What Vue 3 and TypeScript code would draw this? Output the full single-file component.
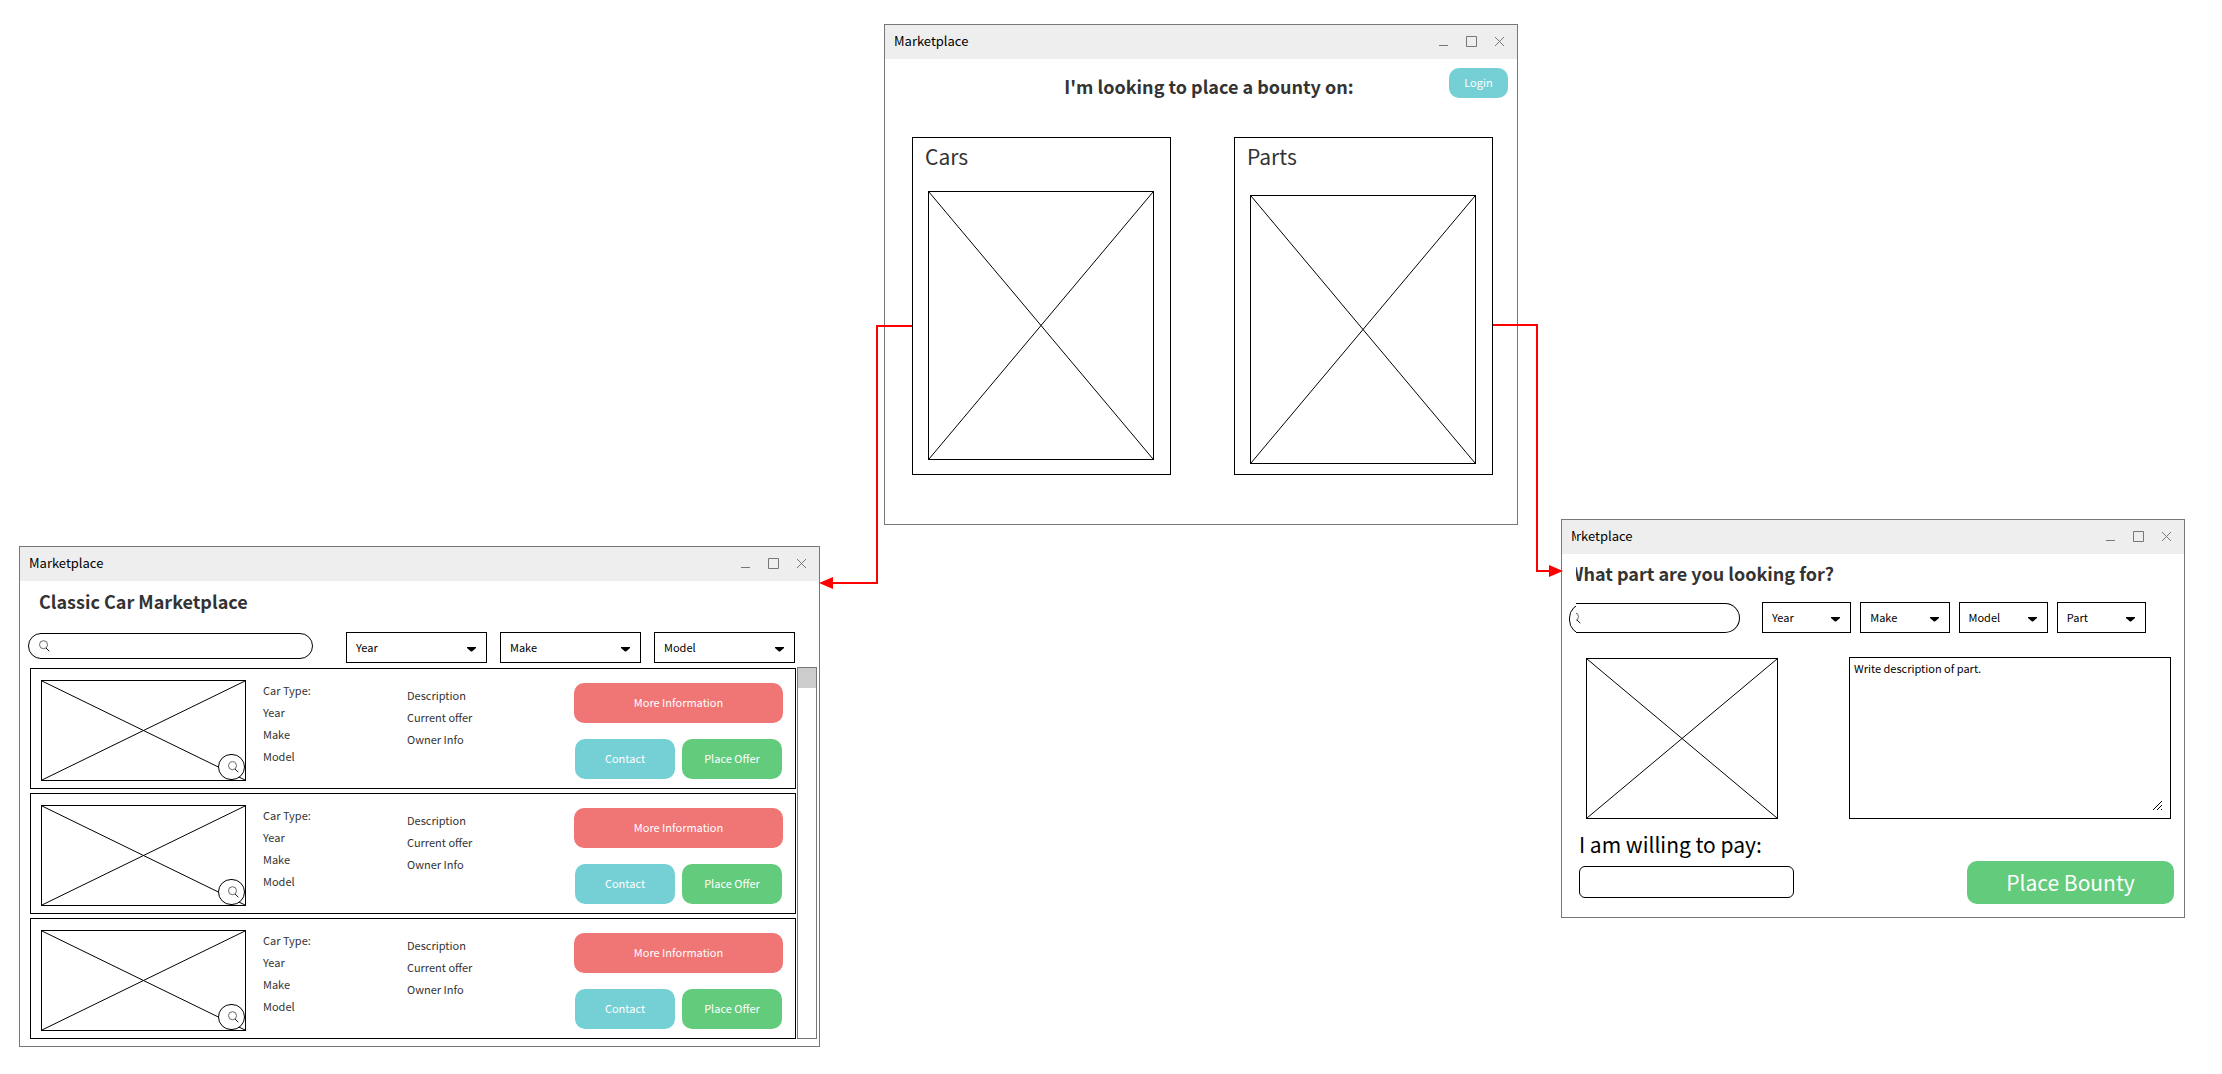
<script setup lang="ts">
import { defineComponent, h } from 'vue'

interface Choice {
  id: string
  title: string
}

const choices: Choice[] = [
  { id: 'cars', title: 'Cars' },
  { id: 'parts', title: 'Parts' },
]

const carFilters: string[] = ['Year', 'Make', 'Model']
const partFilters: string[] = ['Year', 'Make', 'Model', 'Part']
const listings: number[] = [1, 2, 3]
const specs: string[] = ['Car Type:', 'Year', 'Make', 'Model']
const details: string[] = ['Description', 'Current offer', 'Owner Info']

const WindowControls = defineComponent({
  name: 'WindowControls',
  setup() {
    const shapes: [string, string][] = [
      ['Minimize', 'M10 20.5H19'],
      ['Maximize', 'M9.5 11.5H19.5V21.5H9.5Z'],
      ['Close', 'M10 12L19 21M19 12L10 21'],
    ]
    return () =>
      h(
        'div',
        { class: 'controls' },
        shapes.map(([label, d]) =>
          h('button', { type: 'button', class: 'control', 'aria-label': label }, [
            h('svg', { viewBox: '0 0 28 34', width: 28, height: 34 }, [h('path', { d })]),
          ]),
        ),
      )
  },
})

const Crossed = defineComponent({
  name: 'Crossed',
  setup() {
    return () =>
      h('svg', { class: 'crossed', viewBox: '0 0 100 100', preserveAspectRatio: 'none' }, [
        h('path', { d: 'M0 0L100 100M100 0L0 100', 'vector-effect': 'non-scaling-stroke' }),
      ])
  },
})

const Magnifier = defineComponent({
  name: 'Magnifier',
  setup() {
    return () =>
      h('svg', { class: 'magnifier', viewBox: '0 0 11 12', width: 11, height: 12 }, [
        h('circle', { cx: 4.5, cy: 4.7, r: 4, stroke: '#666' }),
        h('path', { d: 'M7 8L10.3 11.2', stroke: '#111' }),
      ])
  },
})
</script>

<template>
  <main class="board">
    <section class="window window-home">
      <header class="titlebar">
        <span class="title">Marketplace</span>
        <WindowControls />
      </header>
      <div class="hero">
        <h1 class="heading">I'm looking to place a bounty on:</h1>
        <button type="button" class="btn btn-teal login">Login</button>
      </div>
      <div class="choices">
        <article v-for="c in choices" :key="c.id" class="choice" :class="c.id">
          <h2 class="choice-title">{{ c.title }}</h2>
          <div class="picture choice-picture"><Crossed /></div>
        </article>
      </div>
    </section>

    <section class="window window-cars">
      <header class="titlebar">
        <span class="title">Marketplace</span>
        <WindowControls />
      </header>
      <h1 class="heading cars-heading">Classic Car Marketplace</h1>
      <form class="toolbar cars-toolbar" @submit.prevent>
        <div class="search">
          <Magnifier />
          <input type="search" class="search-input" aria-label="Search cars" />
        </div>
        <div class="filters">
          <div v-for="f in carFilters" :key="f" class="filter">
            <select class="select" :aria-label="f">
              <option>{{ f }}</option>
            </select>
            <svg class="caret" viewBox="0 0 9 5" width="9" height="5"><path d="M0 0H9V1L5 4.5H4L0 1Z" /></svg>
          </div>
        </div>
      </form>
      <div class="results">
        <ul class="rows">
          <li v-for="n in listings" :key="n" class="row">
            <div class="picture row-picture">
              <Crossed />
              <button type="button" class="zoom" aria-label="Enlarge picture"><Magnifier /></button>
            </div>
            <ul class="facts specs">
              <li v-for="s in specs" :key="s">{{ s }}</li>
            </ul>
            <ul class="facts details">
              <li v-for="d in details" :key="d">{{ d }}</li>
            </ul>
            <div class="actions">
              <button type="button" class="btn btn-red">More Information</button>
              <div class="pair">
                <button type="button" class="btn btn-teal">Contact</button>
                <button type="button" class="btn btn-green">Place Offer</button>
              </div>
            </div>
          </li>
        </ul>
        <div class="scrollbar"><div class="thumb"></div></div>
      </div>
    </section>

    <section class="window window-parts">
      <header class="titlebar">
        <span class="title"><span class="cut-letter">M</span>rketplace</span>
        <WindowControls />
      </header>
      <h1 class="heading parts-heading">What part are you looking for?</h1>
      <form class="toolbar parts-toolbar" @submit.prevent>
        <div class="search-cut">
          <div class="search-end"></div>
          <div class="search-rest">
            <Magnifier />
            <input type="search" class="search-input" aria-label="Search parts" />
          </div>
        </div>
        <div class="filters">
          <div v-for="f in partFilters" :key="f" class="filter">
            <select class="select" :aria-label="f">
              <option>{{ f }}</option>
            </select>
            <svg class="caret" viewBox="0 0 9 5" width="9" height="5"><path d="M0 0H9V1L5 4.5H4L0 1Z" /></svg>
          </div>
        </div>
      </form>
      <div class="part-info">
        <div class="picture part-picture"><Crossed /></div>
        <div class="note">
          <textarea class="textarea" aria-label="Description of part">Write description of part.</textarea>
          <svg class="grip" viewBox="0 0 10 10" width="10" height="10"><path d="M0 9L9 0M4 9L9 4M8 9L9 8" /></svg>
        </div>
      </div>
      <div class="offer">
        <div class="pay">
          <label class="pay-label" for="pay">I am willing to pay:</label>
          <input id="pay" type="text" class="pay-input" />
        </div>
        <button type="button" class="btn btn-green place-bounty">Place Bounty</button>
      </div>
    </section>

    <svg class="links" width="100%" height="100%">
      <path class="wire" d="M912 326H877V583H832" />
      <path class="head" d="M819 583L833 577V589Z" />
      <path class="wire" d="M1493 325H1537V571H1550" />
      <path class="head" d="M1563 571L1549 565V577Z" />
    </svg>
  </main>
</template>

<style>
body {
  margin: 0;
  background: #fff;
}
</style>

<style scoped>
.board {
  position: relative;
  min-height: 100vh;
  background: #fff;
  color: #333;
  font-family: "Noto Sans CJK SC", "Noto Sans", sans-serif;
  font-size: 11px;
  line-height: 22px;
}

.board :deep(*) {
  box-sizing: border-box;
}

h1,
h2,
ul {
  margin: 0;
  padding: 0;
  list-style: none;
}

button,
input,
select,
textarea {
  font: inherit;
  color: #000;
}

.window {
  position: absolute;
  display: flex;
  flex-direction: column;
  border: 1px solid #777;
  background: #fff;
}

.window-home {
  left: 884px;
  top: 24px;
  width: 634px;
  min-height: 501px;
}

.window-cars {
  left: 19px;
  top: 546px;
  width: 801px;
}

.window-parts {
  left: 1561px;
  top: 519px;
  width: 624px;
}

.titlebar {
  display: flex;
  justify-content: space-between;
  height: 34px;
  padding: 0 4px 0 9px;
  background: #eee;
}

.title {
  display: flex;
  color: #000;
  font-size: 13px;
  line-height: 32px;
}

.cut-letter {
  width: 5px;
  overflow: hidden;
}

.titlebar :deep(.controls) {
  display: flex;
}

.titlebar :deep(.control) {
  width: 28px;
  height: 34px;
  padding: 0;
  border: 0;
  background: none;
}

.titlebar :deep(.control svg) {
  display: block;
  fill: none;
  stroke: #777;
}

.heading {
  color: #333;
  font-size: 18px;
  line-height: 28px;
  font-weight: 700;
}

.btn {
  padding: 0 0 2px;
  border: 0;
  border-radius: 10px;
  color: #fff;
  height: 40px;
}

.btn-teal {
  background: #74d0d5;
}

.btn-green {
  background: #62cb7c;
}

.btn-red {
  background: #f07575;
}

.picture {
  position: relative;
  border: 1px solid #000;
}

.picture :deep(.crossed) {
  display: block;
  width: 100%;
  height: 100%;
  fill: none;
  stroke: #000;
}

.hero {
  display: flex;
  align-items: flex-start;
  padding: 9px 9px 0 84px;
}

.hero .heading {
  flex: 1;
  padding-top: 4px;
  text-align: center;
}

.login {
  width: 59px;
  height: 30px;
}

.choices {
  display: flex;
  gap: 63px;
  padding: 37px 24px 0 27px;
}

.choice {
  flex: 1;
  padding: 2px 16px 14px 15px;
  border: 1px solid #000;
}

.choice-title {
  margin-left: -3px;
  font-size: 21px;
  line-height: 32px;
  font-weight: 400;
}

.choice-picture {
  height: 269px;
  margin-top: 19px;
}

.parts {
  padding-bottom: 10px;
}

.parts .choice-picture {
  margin-top: 23px;
}

.cars-heading {
  padding: 6px 19px 0;
}

.toolbar {
  display: flex;
  align-items: flex-start;
}

.cars-toolbar {
  gap: 33px;
  padding: 17px 24px 0 8px;
}

.search {
  display: flex;
  flex: 0 0 285px;
  align-items: center;
  gap: 6px;
  height: 26px;
  margin-top: 1px;
  padding: 0 12px 0 10px;
  border: 1px solid #000;
  border-radius: 13px;
}

.search :deep(.magnifier),
.search-rest :deep(.magnifier),
.zoom :deep(.magnifier) {
  flex: none;
  fill: none;
}

.search-input {
  flex: 1;
  min-width: 0;
  height: 20px;
  padding: 0;
  border: 0;
  outline: 0;
  background: none;
  appearance: none;
}

.filters {
  display: flex;
  flex: 1;
  gap: 13px;
}

.filter {
  position: relative;
  flex: 1;
}

.select {
  display: block;
  width: 100%;
  height: 31px;
  padding: 0 24px 2px 9px;
  border: 1px solid #000;
  border-radius: 0;
  background: #fff;
  appearance: none;
}

.caret {
  position: absolute;
  right: 11px;
  top: 15px;
}

.results {
  display: flex;
  gap: 1px;
  padding: 4px 2px 7px 10px;
}

.rows {
  display: flex;
  flex: 1;
  flex-direction: column;
  gap: 4px;
  padding-top: 1px;
}

.row {
  display: flex;
  align-items: flex-start;
  padding: 10px 12px 7px 10px;
  border: 1px solid #000;
}

.row-picture {
  width: 205px;
  height: 101px;
  margin-top: 1px;
}

.zoom {
  position: absolute;
  right: 0;
  bottom: 0;
  display: flex;
  align-items: center;
  justify-content: center;
  width: 27px;
  height: 26px;
  padding: 0 0 0 4px;
  border: 1px solid #000;
  border-radius: 13px;
  background: #fff;
}

.specs {
  width: 144px;
  margin-left: 17px;
}

.details {
  flex: 1;
  padding-top: 5px;
}

.actions {
  display: flex;
  flex-direction: column;
  gap: 16px;
  width: 209px;
  padding-top: 4px;
}

.pair {
  display: flex;
  gap: 7px;
  padding: 0 1px;
}

.pair .btn {
  flex: 1;
}

.scrollbar {
  width: 20px;
  border: 1px solid #777;
}

.thumb {
  height: 20px;
  background: #ccc;
}

.parts-heading {
  margin: 5px 14px 0;
  overflow: hidden;
  text-indent: -9px;
}

.parts-toolbar {
  gap: 22px;
  padding: 15px 38px 0 7px;
}

.parts-toolbar .filters {
  gap: 9px;
}

.search-cut {
  display: flex;
  flex: 0 0 171px;
  height: 30px;
  margin-top: 1px;
}

.search-end {
  width: 7px;
  overflow: hidden;
}

.search-end::before {
  content: "";
  display: block;
  width: 30px;
  height: 30px;
  border: 1px solid #000;
  border-radius: 15px;
}

.search-rest {
  display: flex;
  flex: 1;
  align-items: center;
  overflow: hidden;
  border: 1px solid #000;
  border-left: 0;
  border-radius: 0 15px 15px 0;
}

.search-rest :deep(.magnifier) {
  margin-left: -6px;
}

.part-info {
  display: flex;
  align-items: flex-end;
  gap: 71px;
  padding: 24px 13px 0 24px;
}

.part-picture {
  width: 192px;
  height: 161px;
}

.note {
  position: relative;
  flex: 1;
}

.textarea {
  display: block;
  width: 100%;
  height: 162px;
  padding: 0 4px;
  border: 1px solid #000;
  background: #fff;
  line-height: 20px;
  resize: none;
}

.grip {
  position: absolute;
  right: 8px;
  bottom: 8px;
  fill: none;
  stroke: #000;
}

.offer {
  display: flex;
  align-items: flex-end;
  justify-content: space-between;
  padding: 11px 10px 13px 17px;
}

.pay {
  display: flex;
  flex-direction: column;
  gap: 8px;
  padding-bottom: 6px;
}

.pay-label {
  height: 28px;
  overflow: hidden;
  color: #000;
  font-size: 21px;
  line-height: 28px;
}

.pay-input {
  width: 215px;
  height: 32px;
  padding: 0 8px;
  border: 1px solid #000;
  border-radius: 6px;
  background: #fff;
}

.place-bounty {
  width: 207px;
  height: 43px;
  font-size: 21px;
}

.links {
  position: absolute;
  inset: 0;
  pointer-events: none;
}

.wire {
  fill: none;
  stroke: #f00;
  stroke-width: 2px;
}

.head {
  fill: #f00;
}
</style>
